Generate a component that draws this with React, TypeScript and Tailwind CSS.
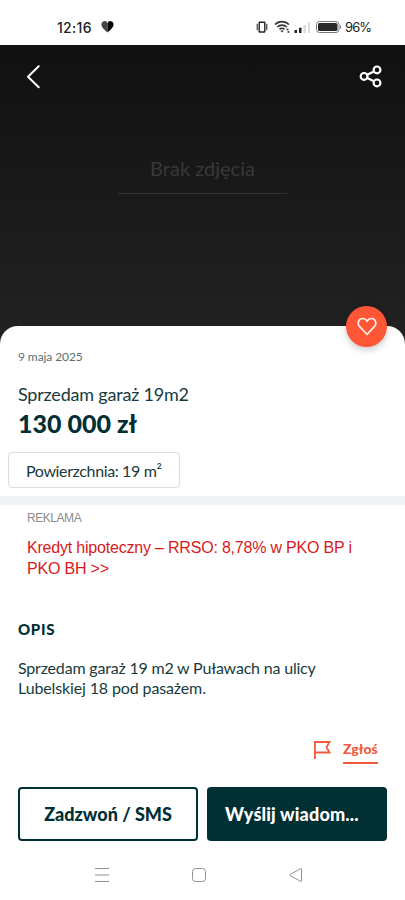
function StatusBar() {
  return (
    <div className="flex h-[45px] items-start bg-white pt-[18px] font-['Inter',sans-serif] text-[#222]">
      <div className="ml-[57px] w-[44px] text-[14px] font-medium leading-[19px] tracking-[0.300px]">12:16</div>
      <svg className="mt-[3px] h-[12px] w-[13px]" viewBox="0 0 13 12">
        <path d="M6.500 11.500C4.500 9.500.5 6.700.5 3.700A3.100 3.100 0 0 1 6.500 2.200Z" fill="#444" />
        <path d="M6.500 11.500c2-2 6-4.800 6-7.800a3.100 3.100 0 0 0-6-1.500Z" fill="#050505" />
      </svg>
      <svg className="ml-[142px] mt-[3px] h-[12px] w-[12px]" viewBox="0 0 12 12" fill="none" stroke="#222">
        <rect x="3.200" y="1.200" width="5.600" height="9.800" rx="0.500" strokeWidth="1.400" />
        <path d="M1.200 2.800v6.400M10.800 2.800v6.400" strokeWidth="1" />
      </svg>
      <svg className="ml-[6px] mt-[2px] h-[14px] w-[17px]" viewBox="0 0 17 14" fill="none" stroke="#333" strokeWidth="1.700">
        <path d="M1 4.500a10 10 0 0 1 14 0M3.300 7a6.600 6.600 0 0 1 9.400 0M5.500 9.300a3.500 3.500 0 0 1 5 0" />
        <path d="M8 12.500 6.400 10.800a2.500 2.500 0 0 1 3.200 0Z" fill="#333" stroke="none" />
        <path d="M12.500 9.500h2M13.500 12h2" strokeWidth="1.700" />
      </svg>
      <svg className="ml-[3px] mt-[3px] h-[13px] w-[17px]" viewBox="0 0 17 13">
        <path d="M.5 9h2.500v3H.5zM5 6.800h2.500V12H5z" fill="#222" />
        <path d="M9.500 4H12v8H9.500zM14 1h2v11h-2z" fill="#ddd" />
      </svg>
      <svg className="ml-[5px] mt-[3px] h-[12px] w-[26px]" viewBox="0 0 26 12">
        <rect x="0.500" y="0.500" width="22.500" height="11" rx="3" fill="none" stroke="#777" />
        <rect x="2" y="2" width="19.500" height="8" rx="1.500" fill="#292929" />
        <path d="M24 4c1.500.5 1.500 3.500 0 4Z" fill="#777" />
      </svg>
      <div className="ml-[3px] text-[13px] leading-[19px] tracking-[-0.900px]">96%</div>
    </div>
  );
}

function Hero() {
  return (
    <div className="h-[281px] bg-linear-to-b from-[#111] to-[#212121]">
      <div className="flex h-[64px] items-center justify-between pl-[26px] pr-[22px]">
        <svg className="h-[24px] w-[15px]" viewBox="0 0 15 24" fill="none" stroke="#fff" strokeWidth="2" strokeLinecap="round" strokeLinejoin="round">
          <path d="M12.700 1.200 2 11.700l10.700 10.500" />
        </svg>
        <svg className="h-[24px] w-[24px]" viewBox="0 0 24 24" fill="none" stroke="#fff" strokeWidth="2.200">
          <circle cx="5.100" cy="11.400" r="3.400" />
          <circle cx="18" cy="4.900" r="3.400" />
          <circle cx="18" cy="17.900" r="3.400" />
          <path d="m8.200 9.800 6.700-3.400M8.200 13l6.700 3.300" />
        </svg>
      </div>
      <div className="mx-auto mt-[45px] h-[40px] w-[169px] border-b border-[#333] text-center text-[20px] leading-[29px] text-[#383838]">
        Brak zdjęcia
      </div>
    </div>
  );
}

export default function App() {
  return (
    <main className="flex h-[900px] w-[405px] flex-col overflow-hidden bg-white font-['Lato',sans-serif] text-[#173b3d]">
      <StatusBar />
      <div className="bg-[#212121]">
        <Hero />
        <section className="relative h-[170px] rounded-t-[18px] bg-white pl-[18px] pt-[22px]">
          <button className="absolute right-[18px] top-[-20px] flex h-[41px] w-[41px] items-center justify-center rounded-full bg-[#ff5636] shadow-[0_3px_7px_rgba(0,0,0,0.2)]">
            <svg className="h-[19px] w-[20px]" viewBox="0 0 20 19" fill="none" stroke="#fff0e8" strokeWidth="1.700" strokeLinejoin="round">
              <path d="M10 17.500 2.300 9.200C.2 6.500 1.300 1.700 5.300 1.500 7.400 1.400 9 2.600 10 4.300c1-1.700 2.600-2.900 4.700-2.800 4 .2 5.100 5 3 7.700Z" />
            </svg>
          </button>
          <p className="text-[12px] leading-[18px] tracking-[-0.080px] text-[#587071]">9 maja 2025</p>
          <h1 className="mt-[15px] text-[18px] leading-[26px] tracking-[-0.200px]">Sprzedam garaż 19m2</h1>
          <p className="text-[25px] font-black leading-[32px] text-[#002f34]">130 000 zł</p>
          <div className="-ml-[10px] mt-[13px] h-[36px] w-[172px] whitespace-nowrap rounded-[4px] border border-[#d8dfe0] pl-[17px] text-[16px] leading-[35px] tracking-[-0.370px]">
            Powierzchnia: 19 m²
          </div>
        </section>
      </div>
      <div className="h-[9px] shrink-0 bg-[#f1f3f5]" />
      <section className="h-[111px] pl-[27px] pt-[5px] font-['Liberation_Sans',sans-serif]">
        <p className="text-[12px] leading-[16px] tracking-[-0.450px] text-[#8b8b8b]">REKLAMA</p>
        <p className="mt-[12px] whitespace-nowrap text-[16px] leading-[20.500px] tracking-[-0.200px] text-[#d7191c]">
          Kredyt hipoteczny – RRSO: 8,78% w PKO BP i<br />PKO BH &gt;&gt;
        </p>
      </section>
      <section className="h-[116px] pl-[18px] pt-[3px]">
        <h2 className="text-[15px] font-black leading-[20px] tracking-[0.700px] text-[#002f34]">OPIS</h2>
        <p className="mt-[19px] whitespace-nowrap text-[16px] leading-[20px] tracking-[-0.190px]">
          Sprzedam garaż 19 m2 w Puławach na ulicy<br /><span className="tracking-[-0.130px]">Lubelskiej 18 pod pasażem.</span>
        </p>
      </section>
      <div className="flex h-[55px] items-start justify-end pr-[27px] pt-[7px] text-[#f15b3d]">
        <svg className="mr-[12px] mt-[1px] h-[20px] w-[18px]" viewBox="0 0 18 20" fill="none" stroke="currentColor" strokeWidth="1.800">
          <path d="M1.900 19V2h14.600l-3 5.300 3 5.200H2" />
        </svg>
        <span className="h-[25px] w-[35px] whitespace-nowrap border-b-2 border-[#f15b3d] text-[14px] font-black leading-[19px]">Zgłoś</span>
      </div>
      <div className="flex gap-[9px] px-[18px]">
        <button className="h-[54px] w-[180px] rounded-[4px] border-2 border-[#002f34] text-[18px] font-black text-[#002f34]">Zadzwoń / SMS</button>
        <button className="h-[54px] w-[180px] rounded-[4px] bg-[#002f34] pl-[18px] text-left text-[18px] font-black tracking-[0.160px] text-white">Wyślij wiadom...</button>
      </div>
      <nav className="mt-[25px] flex pl-[94px]">
        <svg className="h-[18px] w-[16px]" viewBox="0 0 16 18" stroke="#929292"><path d="M1 2.500h14M1 9h14M1 15.500h14" /></svg>
        <svg className="ml-[81px] h-[18px] w-[16px]" viewBox="0 0 16 18" fill="none" stroke="#929292"><rect x="1.500" y="2.500" width="13" height="13" rx="3" /></svg>
        <svg className="ml-[81px] h-[18px] w-[16px]" viewBox="0 0 16 18" fill="none" stroke="#929292" strokeLinejoin="round"><path d="M13.500 3v12q0 .8-.8.4L2 9.500q-.8-.5 0-1L12.700 2.600q.8-.4.8.4Z" /></svg>
      </nav>
    </main>
  );
}
